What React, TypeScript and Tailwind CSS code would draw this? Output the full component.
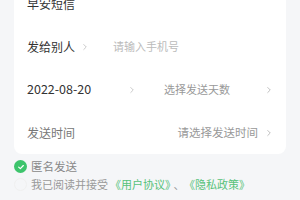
import { ChevronRight } from "lucide-react";

const font = { fontFamily: '"Noto Sans CJK SC", "Noto Sans", sans-serif' };

function Row({ label, children, labelClass = "text-[#333]" }: { label: string; children?: React.ReactNode; labelClass?: string }) {
  return (
    <div className="flex h-[43px] items-center pl-[13px] pr-[12px]">
      <span className={`text-[12px] ${labelClass}`}>{label}</span>
      {children}
    </div>
  );
}

export default function App() {
  return (
    <div className="h-[200px] w-[300px] overflow-hidden bg-[#f5f6f8]" style={font}>
      <div className="mx-[14px] -mt-[18px] rounded-b-[8px] bg-white">
        <Row label="早安短信" />
        <Row label="发给别人">
          <ChevronRight className="ml-[5px] h-[10px] w-[10px] text-[#aaa]" strokeWidth={1.5} />
          <span className="ml-[23px] text-[11px] text-[#bbb]">请输入手机号</span>
        </Row>
        <div className="flex h-[43px] items-center pl-[13px] pr-[12px]">
          <span className="text-[12.5px] text-[#333]">2022-08-20</span>
          <ChevronRight className="ml-[36px] h-[10px] w-[10px] text-[#aaa]" strokeWidth={1.5} />
          <span className="ml-auto text-[11px] text-[#999]">选择发送天数</span>
          <ChevronRight className="ml-[34px] h-[10px] w-[10px] text-[#999]" strokeWidth={1.5} />
        </div>
        <Row label="发送时间" labelClass="text-[#777]">
          <span className="ml-auto text-[11.5px] text-[#999]">请选择发送时间</span>
          <ChevronRight className="ml-[6px] h-[10px] w-[10px] text-[#999]" strokeWidth={1.5} />
        </Row>
      </div>
      <div className="mt-[4px] flex items-center px-[14px]">
        <span className="flex h-[13px] w-[13px] items-center justify-center rounded-full bg-[#3dc46c]">
          <svg viewBox="0 0 12 12" className="h-[8px] w-[8px]" fill="none" stroke="white" strokeWidth={1.8} strokeLinecap="round" strokeLinejoin="round">
            <path d="M2.5 6.2 5 8.5 9.5 3.8" />
          </svg>
        </span>
        <span className="ml-[4px] text-[11.5px] text-[#888]">匿名发送</span>
      </div>
      <div className="mt-[1px] flex items-center px-[14px]">
        <span className="h-[13px] w-[13px] rounded-full border border-[#f0f0f0]" />
        <span className="ml-[4px] text-[11px] text-[#999]">
          我已阅读并接受<span className="ml-[2px] text-[#57c27a]">《用户协议》</span>
          <span className="ml-[3px] mr-[5px]">、</span>
          <span className="text-[#57c27a]">《隐私政策》</span>
        </span>
      </div>
    </div>
  );
}
